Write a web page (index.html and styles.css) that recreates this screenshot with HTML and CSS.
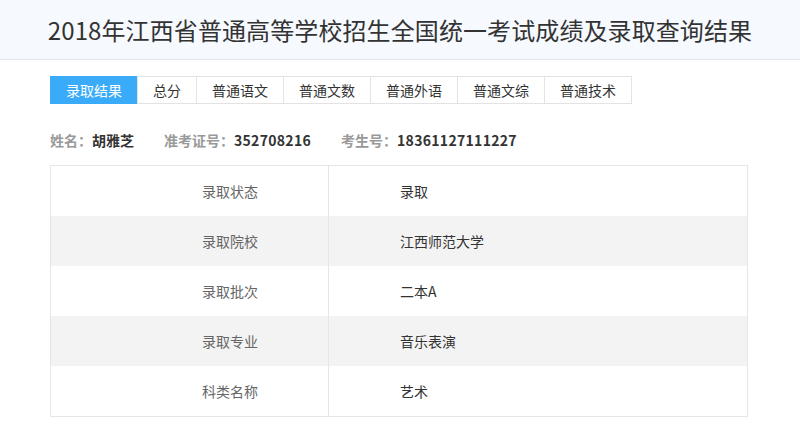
FILE: index.html
```html
<!DOCTYPE html>
<html lang="zh-CN">
<head>
    <meta charset="UTF-8">
    <meta name="viewport" content="width=device-width, initial-scale=1.0">
    <title>录取查询结果</title>
    <link rel="stylesheet" href="styles.css">
</head>
<body>
    <!-- Page header -->
    <div class="header">
        <h1>2018年江西省普通高等学校招生全国统一考试成绩及录取查询结果</h1>
    </div>
    <div class="main">
        <div class="tabs">
            <a class="active" href="#">录取结果</a>
            <a href="#">总分</a>
            <a href="#">普通语文</a>
            <a href="#">普通文数</a>
            <a href="#">普通外语</a>
            <a href="#">普通文综</a>
            <a href="#">普通技术</a>
        </div>
        <div class="info">
            <span class="item"><span class="label">姓名：</span>胡雅芝</span>
            <span class="item"><span class="label">准考证号：</span><span class="num">352708216</span></span>
            <span class="item"><span class="label">考生号：</span><span class="num">18361127111227</span></span>
        </div>
        <table class="result">
            <tr><td class="key">录取状态</td><td class="val">录取</td></tr>
            <tr><td class="key">录取院校</td><td class="val">江西师范大学</td></tr>
            <tr><td class="key">录取批次</td><td class="val">二本A</td></tr>
            <tr><td class="key">录取专业</td><td class="val">音乐表演</td></tr>
            <tr><td class="key">科类名称</td><td class="val">艺术</td></tr>
        </table>
    </div>
</body>
</html>
```

FILE: styles.css
```css
/* General styles */
body {
    font-family: "Noto Sans CJK SC", "Noto Sans", sans-serif;
    margin: 0;
    padding: 0;
    color: #333;
    background: #fff;
}
.header {
    background: #f6f9fe;
    border-bottom: 1px solid #dfe5f0;
    height: 59px;
    display: flex;
    align-items: center;
    justify-content: center;
}
h1 {
    margin: 0;
    font-size: 24px;
    font-weight: normal;
    color: #333;
    line-height: 1;
    letter-spacing: 0.1px;
}
.main {
    width: 698px;
    margin: 16px 0 0 50px;
}
.tabs {
    display: flex;
    padding-left: 1px;
}
.tabs a {
    display: block;
    height: 26px;
    line-height: 26px;
    padding: 0 15px;
    font-size: 14px;
    color: #333;
    text-decoration: none;
    border: 1px solid #e3e3e3;
    margin-left: -1px;
}
.tabs a.active {
    background: #3aabf9;
    border-color: #3aabf9;
    color: #fff;
}
.info {
    display: flex;
    gap: 30px;
    margin-top: 25px;
    font-size: 14px;
    font-weight: bold;
    color: #333;
    line-height: 22px;
}
.info .label {
    color: #999;
}
.info .num {
    letter-spacing: 0.3px;
}
.result {
    width: 100%;
    margin-top: 14px;
    border-collapse: collapse;
    border: 1px solid #e6e6e6;
    font-size: 14px;
}
.result td {
    height: 50px;
    padding: 0;
}
.result tr:nth-child(even) {
    background: #f3f3f3;
}
.result .key {
    width: 207px;
    text-align: right;
    padding-right: 70px;
    color: #666;
    border-right: 1px solid #e6e6e6;
}
.result .val {
    padding-left: 71px;
    color: #333;
}
```
